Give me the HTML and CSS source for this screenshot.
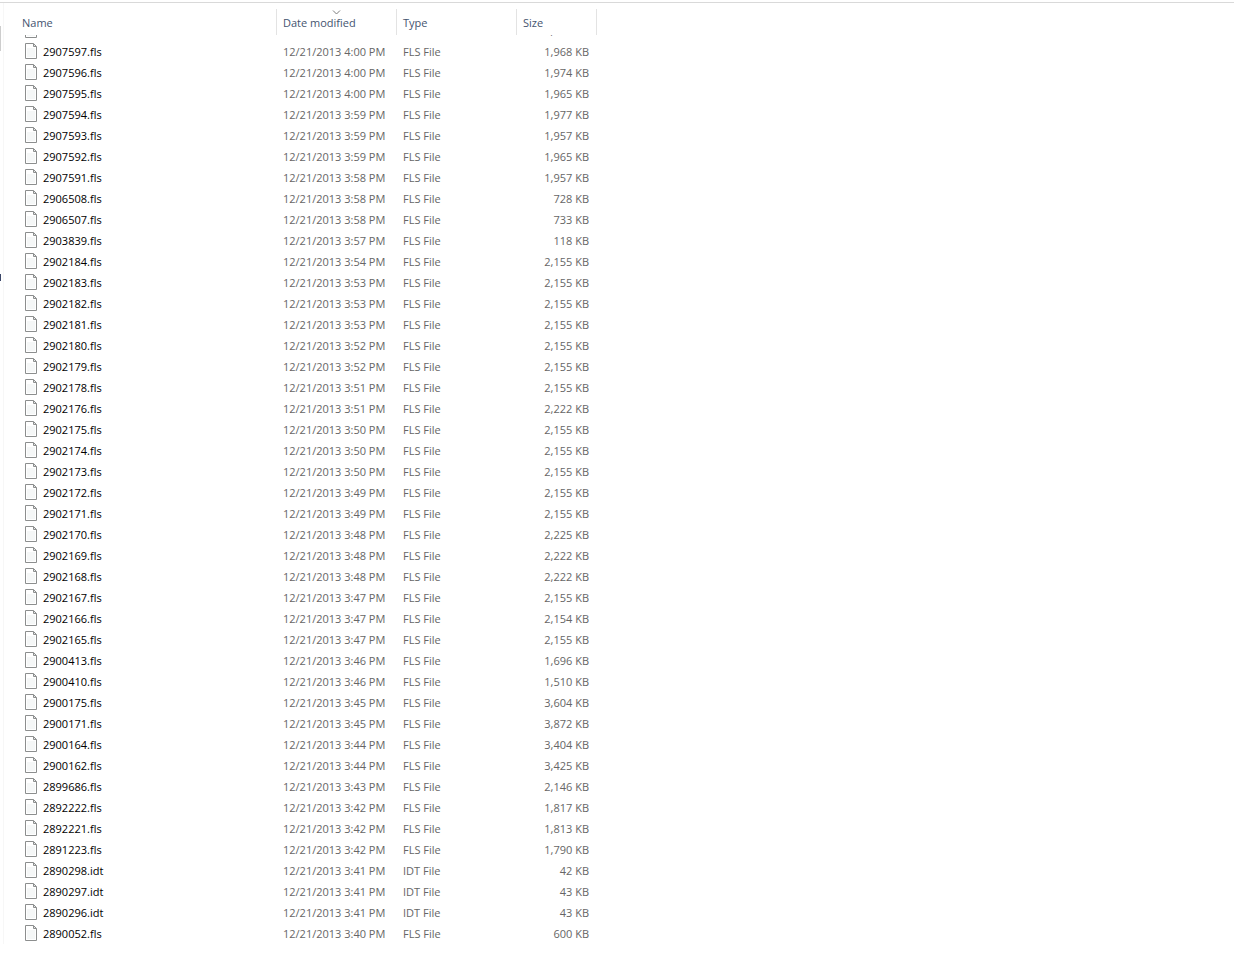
FILE: index.html
```
<!DOCTYPE html>
<html lang="en">
<head>
<meta charset="utf-8">
<title>Files</title>
<link rel="stylesheet" href="styles.css">
</head>
<body>
<svg class="sprite" aria-hidden="true">
  <symbol id="doc" viewBox="0 0 13 16">
    <path d="M1.5 .5H9.5L12.5 3.5V15.5H1.5Z" fill="#fff"/>
    <path d="M3 5H11V14H3Z" fill="#f5f7f7"/>
    <path d="M9.5 .5H1.5V15.5H12.5V3.5" fill="none" stroke="#8c8e8e"/>
    <path d="M9.5 .5V3.5H12.5Z" fill="#e6e8e8" stroke="#8c8e8e"/>
  </symbol>
</svg>
<main class="explorer">
  <aside class="nav-edge"><span class="thumb"></span><span class="nav-item"></span></aside>
  <table class="files">
    <colgroup><col class="c-name"><col class="c-date"><col class="c-type"><col class="c-size"></colgroup>
    <thead>
      <tr>
        <th><button type="button">Name</button></th>
        <th aria-sort="descending"><button type="button">Date modified<svg class="caret" viewBox="0 0 9 5" aria-hidden="true"><path d="M1 .5L4.5 4L8 .5" fill="none" stroke="#7c7c7c"/></svg></button></th>
        <th><button type="button">Type</button></th>
        <th><button type="button">Size</button></th>
      </tr>
    </thead>
    <tbody>
      <tr class="cut"><td><div><svg><use href="#doc"/></svg>2907598.fls</div></td><td><div>12/21/2013 4:00 PM</div></td><td><div>FLS File</div></td><td><div>1,968 KB</div></td></tr>
      <tr><td><svg><use href="#doc"/></svg>2907597.fls</td><td>12/21/2013 4:00 PM</td><td>FLS File</td><td>1,968 KB</td></tr>
      <tr><td><svg><use href="#doc"/></svg>2907596.fls</td><td>12/21/2013 4:00 PM</td><td>FLS File</td><td>1,974 KB</td></tr>
      <tr><td><svg><use href="#doc"/></svg>2907595.fls</td><td>12/21/2013 4:00 PM</td><td>FLS File</td><td>1,965 KB</td></tr>
      <tr><td><svg><use href="#doc"/></svg>2907594.fls</td><td>12/21/2013 3:59 PM</td><td>FLS File</td><td>1,977 KB</td></tr>
      <tr><td><svg><use href="#doc"/></svg>2907593.fls</td><td>12/21/2013 3:59 PM</td><td>FLS File</td><td>1,957 KB</td></tr>
      <tr><td><svg><use href="#doc"/></svg>2907592.fls</td><td>12/21/2013 3:59 PM</td><td>FLS File</td><td>1,965 KB</td></tr>
      <tr><td><svg><use href="#doc"/></svg>2907591.fls</td><td>12/21/2013 3:58 PM</td><td>FLS File</td><td>1,957 KB</td></tr>
      <tr><td><svg><use href="#doc"/></svg>2906508.fls</td><td>12/21/2013 3:58 PM</td><td>FLS File</td><td>728 KB</td></tr>
      <tr><td><svg><use href="#doc"/></svg>2906507.fls</td><td>12/21/2013 3:58 PM</td><td>FLS File</td><td>733 KB</td></tr>
      <tr><td><svg><use href="#doc"/></svg>2903839.fls</td><td>12/21/2013 3:57 PM</td><td>FLS File</td><td>118 KB</td></tr>
      <tr><td><svg><use href="#doc"/></svg>2902184.fls</td><td>12/21/2013 3:54 PM</td><td>FLS File</td><td>2,155 KB</td></tr>
      <tr><td><svg><use href="#doc"/></svg>2902183.fls</td><td>12/21/2013 3:53 PM</td><td>FLS File</td><td>2,155 KB</td></tr>
      <tr><td><svg><use href="#doc"/></svg>2902182.fls</td><td>12/21/2013 3:53 PM</td><td>FLS File</td><td>2,155 KB</td></tr>
      <tr><td><svg><use href="#doc"/></svg>2902181.fls</td><td>12/21/2013 3:53 PM</td><td>FLS File</td><td>2,155 KB</td></tr>
      <tr><td><svg><use href="#doc"/></svg>2902180.fls</td><td>12/21/2013 3:52 PM</td><td>FLS File</td><td>2,155 KB</td></tr>
      <tr><td><svg><use href="#doc"/></svg>2902179.fls</td><td>12/21/2013 3:52 PM</td><td>FLS File</td><td>2,155 KB</td></tr>
      <tr><td><svg><use href="#doc"/></svg>2902178.fls</td><td>12/21/2013 3:51 PM</td><td>FLS File</td><td>2,155 KB</td></tr>
      <tr><td><svg><use href="#doc"/></svg>2902176.fls</td><td>12/21/2013 3:51 PM</td><td>FLS File</td><td>2,222 KB</td></tr>
      <tr><td><svg><use href="#doc"/></svg>2902175.fls</td><td>12/21/2013 3:50 PM</td><td>FLS File</td><td>2,155 KB</td></tr>
      <tr><td><svg><use href="#doc"/></svg>2902174.fls</td><td>12/21/2013 3:50 PM</td><td>FLS File</td><td>2,155 KB</td></tr>
      <tr><td><svg><use href="#doc"/></svg>2902173.fls</td><td>12/21/2013 3:50 PM</td><td>FLS File</td><td>2,155 KB</td></tr>
      <tr><td><svg><use href="#doc"/></svg>2902172.fls</td><td>12/21/2013 3:49 PM</td><td>FLS File</td><td>2,155 KB</td></tr>
      <tr><td><svg><use href="#doc"/></svg>2902171.fls</td><td>12/21/2013 3:49 PM</td><td>FLS File</td><td>2,155 KB</td></tr>
      <tr><td><svg><use href="#doc"/></svg>2902170.fls</td><td>12/21/2013 3:48 PM</td><td>FLS File</td><td>2,225 KB</td></tr>
      <tr><td><svg><use href="#doc"/></svg>2902169.fls</td><td>12/21/2013 3:48 PM</td><td>FLS File</td><td>2,222 KB</td></tr>
      <tr><td><svg><use href="#doc"/></svg>2902168.fls</td><td>12/21/2013 3:48 PM</td><td>FLS File</td><td>2,222 KB</td></tr>
      <tr><td><svg><use href="#doc"/></svg>2902167.fls</td><td>12/21/2013 3:47 PM</td><td>FLS File</td><td>2,155 KB</td></tr>
      <tr><td><svg><use href="#doc"/></svg>2902166.fls</td><td>12/21/2013 3:47 PM</td><td>FLS File</td><td>2,154 KB</td></tr>
      <tr><td><svg><use href="#doc"/></svg>2902165.fls</td><td>12/21/2013 3:47 PM</td><td>FLS File</td><td>2,155 KB</td></tr>
      <tr><td><svg><use href="#doc"/></svg>2900413.fls</td><td>12/21/2013 3:46 PM</td><td>FLS File</td><td>1,696 KB</td></tr>
      <tr><td><svg><use href="#doc"/></svg>2900410.fls</td><td>12/21/2013 3:46 PM</td><td>FLS File</td><td>1,510 KB</td></tr>
      <tr><td><svg><use href="#doc"/></svg>2900175.fls</td><td>12/21/2013 3:45 PM</td><td>FLS File</td><td>3,604 KB</td></tr>
      <tr><td><svg><use href="#doc"/></svg>2900171.fls</td><td>12/21/2013 3:45 PM</td><td>FLS File</td><td>3,872 KB</td></tr>
      <tr><td><svg><use href="#doc"/></svg>2900164.fls</td><td>12/21/2013 3:44 PM</td><td>FLS File</td><td>3,404 KB</td></tr>
      <tr><td><svg><use href="#doc"/></svg>2900162.fls</td><td>12/21/2013 3:44 PM</td><td>FLS File</td><td>3,425 KB</td></tr>
      <tr><td><svg><use href="#doc"/></svg>2899686.fls</td><td>12/21/2013 3:43 PM</td><td>FLS File</td><td>2,146 KB</td></tr>
      <tr><td><svg><use href="#doc"/></svg>2892222.fls</td><td>12/21/2013 3:42 PM</td><td>FLS File</td><td>1,817 KB</td></tr>
      <tr><td><svg><use href="#doc"/></svg>2892221.fls</td><td>12/21/2013 3:42 PM</td><td>FLS File</td><td>1,813 KB</td></tr>
      <tr><td><svg><use href="#doc"/></svg>2891223.fls</td><td>12/21/2013 3:42 PM</td><td>FLS File</td><td>1,790 KB</td></tr>
      <tr><td><svg><use href="#doc"/></svg>2890298.idt</td><td>12/21/2013 3:41 PM</td><td>IDT File</td><td>42 KB</td></tr>
      <tr><td><svg><use href="#doc"/></svg>2890297.idt</td><td>12/21/2013 3:41 PM</td><td>IDT File</td><td>43 KB</td></tr>
      <tr><td><svg><use href="#doc"/></svg>2890296.idt</td><td>12/21/2013 3:41 PM</td><td>IDT File</td><td>43 KB</td></tr>
      <tr><td><svg><use href="#doc"/></svg>2890052.fls</td><td>12/21/2013 3:40 PM</td><td>FLS File</td><td>600 KB</td></tr>
    </tbody>
  </table>
</main>
</body>
</html>
```

FILE: styles.css
```
* { box-sizing: border-box; }

body {
  margin: 0;
  padding-top: 2px;
  background: #fff;
  color: #666;
  font: 11px/21px "Open Sans", "Noto Sans", sans-serif;
}

.sprite { position: absolute; width: 0; height: 0; }

.explorer {
  display: flex;
  border-top: 1px solid #d9d9d9;
}

.nav-edge {
  display: flex;
  flex-direction: column;
  width: 4px;
  border-right: 1px solid #f7f7f7;
}

.thumb {
  width: 1px;
  height: 25px;
  margin-top: 23px;
  background: #cdcdcd;
}

.nav-item {
  width: 1px;
  height: 7px;
  margin-top: 223px;
  background: #3b4668;
}

.files {
  table-layout: fixed;
  width: 593px;
  border-collapse: separate;
  border-spacing: 0;
}

.c-name { width: 273px; }
.c-date, .c-type { width: 120px; }
.c-size { width: 80px; }

th {
  height: 32px;
  padding: 6px 0 0;
  font-weight: normal;
  vertical-align: top;
}

th button {
  position: relative;
  display: block;
  width: 100%;
  height: 26px;
  padding: 0 0 0 6px;
  border: 0;
  border-right: 1px solid #e3e3e3;
  background: none;
  color: #44546f;
  font: inherit;
  text-align: left;
}

th:first-child button { padding-left: 18px; }

.caret {
  position: absolute;
  top: 1px;
  left: 55px;
  width: 9px;
  height: 5px;
}

td {
  height: 21px;
  padding: 0 0 0 6px;
  white-space: nowrap;
}

td:first-child { padding-left: 20px; color: #000; }

td:last-child { padding: 0 8px 0 0; text-align: right; }

td svg {
  width: 13px;
  height: 16px;
  margin-right: 6px;
  vertical-align: -3px;
}

.cut td { height: 6px; }

/* Row scrolled partly under the header: only its bottom edge shows. */
.cut div {
  display: flex;
  align-items: flex-end;
  height: 6px;
  overflow: hidden;
}

.cut svg { flex: none; margin-bottom: 3px; }

.cut td:last-child div { justify-content: flex-end; }
```
